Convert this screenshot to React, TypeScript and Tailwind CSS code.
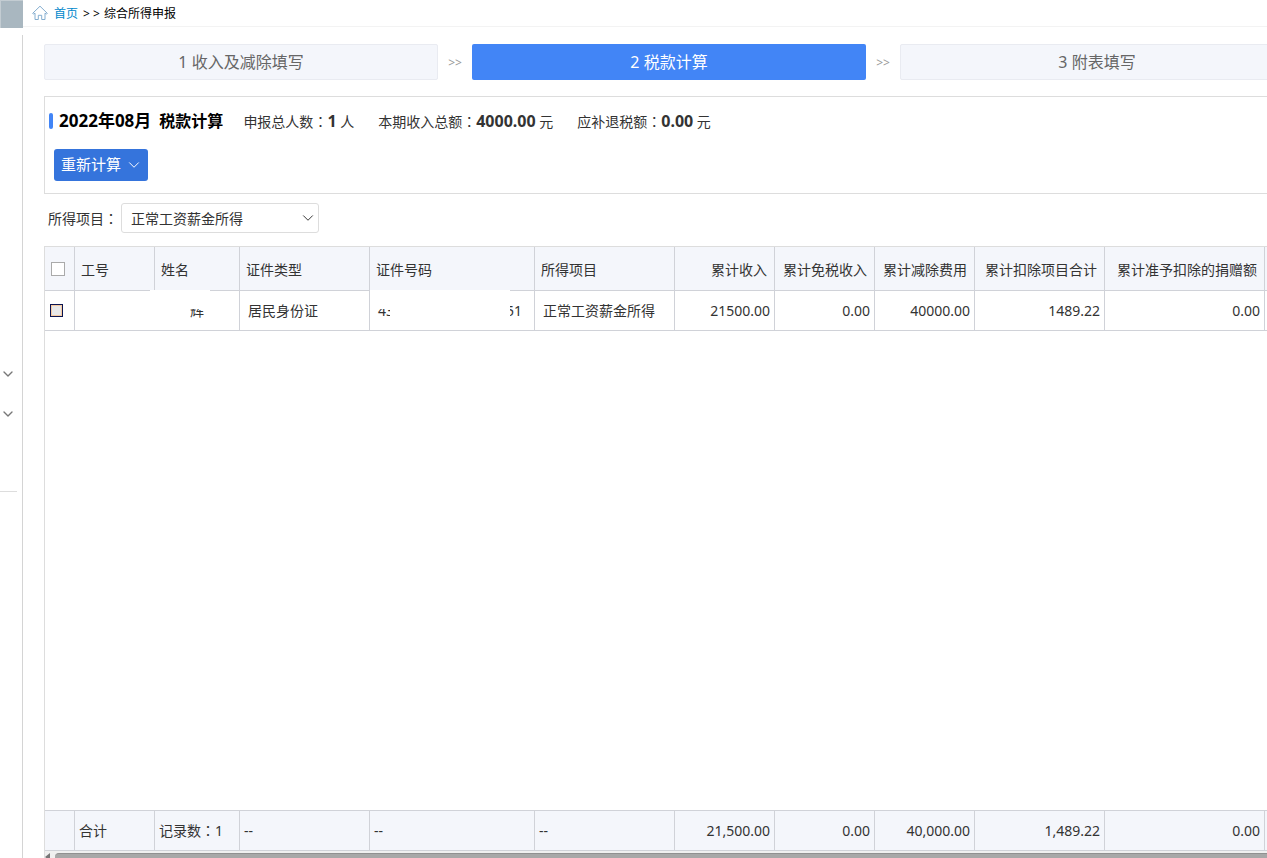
import { ChevronDown } from "lucide-react";

/* ---------- Data ---------- */

const steps = ["1 收入及减除填写", "2 税款计算", "3 附表填写"];

const columns = [
  { title: "工号", total: "合计" },
  { title: "姓名", total: "记录数:1" },
  { title: "证件类型", total: "--" },
  { title: "证件号码", total: "--" },
  { title: "所得项目", total: "--" },
  { title: "累计收入", value: "21500.00", total: "21,500.00", right: true },
  { title: "累计免税收入", value: "0.00", total: "0.00", right: true },
  { title: "累计减除费用", value: "40000.00", total: "40,000.00", right: true },
  { title: "累计扣除项目合计", value: "1489.22", total: "1,489.22", right: true },
  { title: "累计准予扣除的捐赠额", value: "0.00", total: "0.00", right: true },
];

/* ---------- Helpers ---------- */

// The TC face centres the full-width colon
function Colon() {
  return (
    <span lang="zh-TW" className="font-['Noto_Sans_CJK_TC',sans-serif]">
      {"\uff1a"}
    </span>
  );
}

function withColon(text: string) {
  const [label, rest] = text.split(/[:\uff1a]/);
  if (rest === undefined) return text;
  return (
    <>
      {label}
      <Colon />
      {rest}
    </>
  );
}

function ColumnWidths() {
  return (
    <colgroup>
      <col className="w-[30px]" />
      <col className="w-[80px]" />
      <col className="w-[85px]" />
      <col className="w-[130px]" />
      <col className="w-[165px]" />
      <col className="w-[140px]" />
      <col className="w-[100px]" />
      <col className="w-[100px]" />
      <col className="w-[100px]" />
      <col className="w-[130px]" />
      <col className="w-[160px]" />
      <col />
    </colgroup>
  );
}

function Stat({ label, value, unit }: { label: string; value: string; unit: string }) {
  return (
    <p className="leading-6">
      {label}
      <Colon />
      <strong className="text-base leading-6 font-bold">{value}</strong> {unit}
    </p>
  );
}

/* ---------- Sections ---------- */

function Sidebar() {
  return (
    <aside className="flex w-[23px] shrink-0 flex-col">
      <div className="h-7 border-t border-l border-[#c3ccd2] bg-[#a9b7c0]" />
      <div className="mt-[7px] flex-1 border-r border-[#d4d4d4] pt-[333px]">
        <button type="button" aria-label="展开菜单" className="flex h-3 w-4 items-center justify-center">
          <ChevronDown className="size-4 shrink-0 text-[#777]" />
        </button>
        <button type="button" aria-label="展开子菜单" className="mt-7 flex h-3 w-4 items-center justify-center">
          <ChevronDown className="size-4 shrink-0 text-[#777]" />
        </button>
        <hr className="mt-[71px] w-[17px] border-[#ddd]" />
      </div>
    </aside>
  );
}

function Breadcrumb() {
  return (
    <nav className="flex h-[27px] shrink-0 items-center border-b border-[#f3f3f3] pl-[9px] text-xs text-black">
      <svg viewBox="0 0 16 16" className="size-4 fill-none stroke-[#85aed0]" strokeWidth="1">
        <path d="M.7 8.3 8 1.2l7.3 7.1-.7.8-1.6-.9v6.3H9.7v-4.2H6.3v4.2H3V8.2l-1.6.9z" />
      </svg>
      <div className="ml-1.5 flex items-center pt-0.5">
        <a href="#" className="text-[#0088cc]">
          首页
        </a>
        <span className="ml-[5px]">&gt; &gt;</span>
        <span className="ml-1">综合所得申报</span>
      </div>
    </nav>
  );
}

function Steps() {
  return (
    <ol className="-mr-[27px] flex text-base">
      {steps.map((step, i) => (
        <li key={step} className={i > 0 ? "flex flex-[428_1_0%] items-center" : "flex flex-[394_1_0%] items-center"}>
          {i > 0 && <span className="w-[34px] pt-0.5 text-center text-xs text-[#999]">&gt;&gt;</span>}
          <button
            type="button"
            className={
              i === 1
                ? "h-9 flex-1 rounded-xs bg-[#4285f6] text-white"
                : "h-9 flex-1 rounded-xs border border-[#e9ebf1] bg-[#f4f6fb] text-[#666]"
            }
          >
            {step}
          </button>
        </li>
      ))}
    </ol>
  );
}

function Summary() {
  return (
    <section className="mt-4 h-[98px] border border-r-0 border-[#ddd] pl-1">
      <div className="mt-3 flex h-6 items-center">
        <span className="h-4 w-1 rounded-xs bg-[#4285f6]" />
        <h1 className="ml-1.5 flex items-baseline gap-2 text-base font-bold text-black">
          <span className="text-[17px]">2022年08月</span>
          <span>税款计算</span>
        </h1>
        <div className="ml-5 flex gap-6">
          <Stat label="申报总人数" value="1" unit="人" />
          <Stat label="本期收入总额" value="4000.00" unit="元" />
          <Stat label="应补退税额" value="0.00" unit="元" />
        </div>
      </div>
      <button
        type="button"
        className="mt-4 ml-[5px] flex h-8 w-[94px] items-center rounded-[3px] bg-[#3574dc] pl-[7px] text-[15px] text-white"
      >
        重新计算
        <ChevronDown className="ml-1 size-[18px]" strokeWidth={1.3} />
      </button>
    </section>
  );
}

function Filter() {
  return (
    <div className="mt-[9px] flex h-[30px] items-center pl-1">
      <label htmlFor="income">
        所得项目
        <Colon />
      </label>
      <div className="relative ml-[3px]">
        <select
          id="income"
          className="block h-[30px] w-[198px] appearance-none rounded-[3px] border border-[#ddd] bg-white pt-0.5 pl-[9px]"
        >
          <option>正常工资薪金所得</option>
        </select>
        <ChevronDown className="pointer-events-none absolute top-1.5 right-0.5 size-[18px]" strokeWidth={1.3} />
      </div>
    </div>
  );
}

function Grid() {
  const cell = "border-r border-[#d0d2d8] whitespace-nowrap";

  return (
    <section className="mt-[13px] flex flex-1 flex-col border-t border-l border-[#ddd]">
      <div className="flex-1">
        <table className="w-full table-fixed border-separate border-spacing-0">
          <ColumnWidths />
          <thead className="bg-[#f4f6fb]">
            <tr className="h-11">
              <th className={`${cell} border-b pl-1.5`}>
                <input
                  type="checkbox"
                  aria-label="全选"
                  className="block size-[14px] appearance-none border border-[#aaa] bg-white"
                />
              </th>
              {columns.map((col) => (
                <th
                  key={col.title}
                  className={`${cell} border-b pt-0.5 font-normal ${col.right ? "pr-[7px] text-right" : "pl-1.5 text-left"}`}
                >
                  {col.title}
                </th>
              ))}
              <th className="border-b border-[#d0d2d8]" />
            </tr>
          </thead>
          <tbody>
            <tr className="h-10">
              <td className={`${cell} border-b pl-[5px]`}>
                <input
                  type="checkbox"
                  aria-label="选择此行"
                  className="block size-[13px] appearance-none border border-[#0a1450] bg-[#e8e8e8] shadow-[inset_0_0_0_1px_#f5c9a0]"
                />
              </td>
              <td className="border-b border-[#d0d2d8]" />
              {/* privacy masks lie over the name and the ID number */}
              <td className={`${cell} relative border-b pl-[35px]`}>
                辉
                <span className="absolute -top-px -left-[5px] h-[19px] w-[60px] bg-white" />
              </td>
              <td className={`${cell} border-b pl-2`}>居民身份证</td>
              <td className={`${cell} relative border-b pr-3 pl-2`}>
                <div className="flex justify-between">
                  <span>43</span>
                  <span>51</span>
                </div>
                <span className="absolute -top-px left-0 h-[19px] w-[140px] bg-white" />
                <span className="absolute top-[18px] left-5 h-5 w-[120px] bg-white" />
              </td>
              <td className={`${cell} border-b pl-2`}>正常工资薪金所得</td>
              {columns.slice(5).map((col) => (
                <td key={col.title} className={`${cell} border-b pr-1 text-right`}>
                  {col.value}
                </td>
              ))}
              <td className="border-b border-[#d0d2d8]" />
            </tr>
          </tbody>
        </table>
      </div>

      <table className="w-full table-fixed border-separate border-spacing-0 bg-[#f4f6fb]">
        <ColumnWidths />
        <tbody>
          <tr className="h-[41px]">
            <td className={`${cell} border-y`} />
            {columns.map((col) => (
              <td key={col.title} className={`${cell} border-y ${col.right ? "pr-1 text-right" : "pl-1 text-left"}`}>
                {withColon(col.total)}
              </td>
            ))}
            <td className="border-y border-[#d0d2d8]" />
          </tr>
        </tbody>
      </table>

      {/* horizontal scrollbar */}
      <div className="flex h-[7px] items-start overflow-hidden bg-[#f0f0f0] pt-0.5">
        <svg viewBox="0 0 6 8" className="h-2 w-1.5 shrink-0 fill-[#777]">
          <path d="M5 0v8L0 4z" />
        </svg>
        <div className="ml-1 h-2 flex-1 rounded-l-full border-t border-[#909090] bg-[#a8a8a8]" />
      </div>
    </section>
  );
}

/* ---------- Page ---------- */

export default function App() {
  return (
    <div className="flex min-h-screen overflow-hidden bg-white font-['Noto_Sans','Noto_Sans_CJK_SC',sans-serif] text-sm text-[#333]">
      <Sidebar />
      <div className="flex min-w-0 flex-1 flex-col">
        <Breadcrumb />
        <main className="flex flex-1 flex-col pt-[17px] pl-[21px]">
          <Steps />
          <Summary />
          <Filter />
          <Grid />
        </main>
      </div>
    </div>
  );
}
